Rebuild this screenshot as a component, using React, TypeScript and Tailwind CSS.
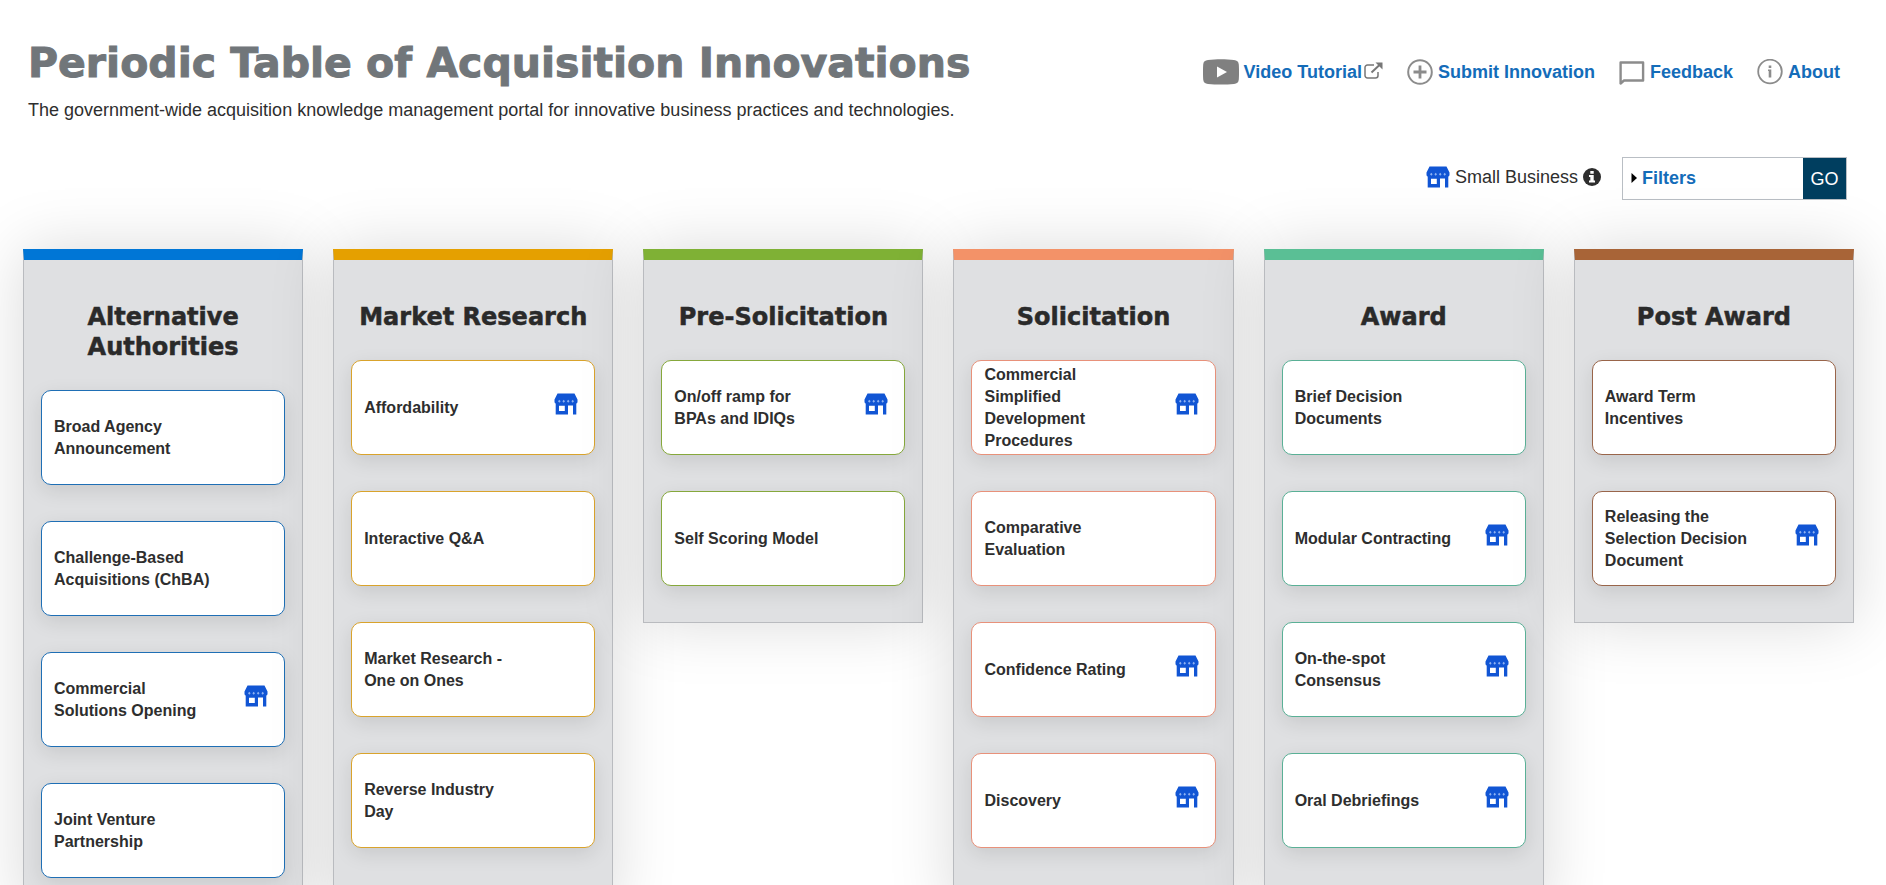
import React from 'react';
import clsx from 'clsx';

type Card = { title: string; smallBusiness?: boolean };

type Column = {
  heading: string;
  bar: string;
  border: string;
  short?: boolean;
  cards: Card[];
};

const columns: Column[] = [
  {
    heading: 'Alternative Authorities',
    bar: 'border-t-[#0076d6]',
    border: 'border-[#1f6fb5]',
    cards: [
      { title: 'Broad Agency Announcement' },
      { title: 'Challenge-Based Acquisitions (ChBA)' },
      { title: 'Commercial Solutions Opening', smallBusiness: true },
      { title: 'Joint Venture Partnership' },
    ],
  },
  {
    heading: 'Market Research',
    bar: 'border-t-[#e5a000]',
    border: 'border-[#d9a32c]',
    cards: [
      { title: 'Affordability', smallBusiness: true },
      { title: 'Interactive Q&A' },
      { title: 'Market Research - One on Ones' },
      { title: 'Reverse Industry Day' },
    ],
  },
  {
    heading: 'Pre-Solicitation',
    bar: 'border-t-[#7fb135]',
    border: 'border-[#86a83c]',
    short: true,
    cards: [
      { title: 'On/off ramp for BPAs and IDIQs', smallBusiness: true },
      { title: 'Self Scoring Model' },
    ],
  },
  {
    heading: 'Solicitation',
    bar: 'border-t-[#f39268]',
    border: 'border-[#e8917a]',
    cards: [
      { title: 'Commercial Simplified Development Procedures', smallBusiness: true },
      { title: 'Comparative Evaluation' },
      { title: 'Confidence Rating', smallBusiness: true },
      { title: 'Discovery', smallBusiness: true },
    ],
  },
  {
    heading: 'Award',
    bar: 'border-t-[#5abf95]',
    border: 'border-[#5ab096]',
    cards: [
      { title: 'Brief Decision Documents' },
      { title: 'Modular Contracting', smallBusiness: true },
      { title: 'On-the-spot Consensus', smallBusiness: true },
      { title: 'Oral Debriefings', smallBusiness: true },
    ],
  },
  {
    heading: 'Post Award',
    bar: 'border-t-[#a86437]',
    border: 'border-[#99654a]',
    short: true,
    cards: [
      { title: 'Award Term Incentives' },
      { title: 'Releasing the Selection Decision Document', smallBusiness: true },
    ],
  },
];

function StoreIcon() {
  return (
    <svg width="24" height="22" viewBox="0 0 24 22" className="shrink-0" aria-hidden="true">
      <path
        fill="#1155d4"
        fillRule="evenodd"
        d="M3.500 0.500h17l3 6v2.200c0 .9-.4 1.500-1.200 1.900V21.500h-3.300V12.500h-5v9H1.700V10.600C.9 10.200.500 9.600.500 8.700V6.500zM5 12.800v5.200h5.800v-5.200z"
      />
      <path
        fill="#8fb2f2"
        d="M4 8.200l1.300-1.500 1.300 1.500-1.300 1.600zM8.400 8.200l1.300-1.500L11 8.200 9.700 9.800zM12.900 8.200l1.300-1.500 1.300 1.500-1.300 1.600zM17.400 8.200l1.300-1.500L20 8.200l-1.300 1.600z"
      />
    </svg>
  );
}

function VideoIcon() {
  return (
    <svg width="36" height="26" viewBox="0 0 36 26" aria-hidden="true">
      <path
        fill="#808080"
        d="M5 1C13 0 23 0 31 1c3 .3 4.500 1.500 4.800 4.500.3 5 .3 10 0 15-.3 3-1.800 4.200-4.800 4.500-8 .8-18 .8-26 0-3-.3-4.500-1.500-4.800-4.500-.3-5-.3-10 0-15C.5 2.500 2 1.300 5 1z"
      />
      <path fill="#fff" d="M14 7.500v11l10-5.500z" />
    </svg>
  );
}

function ExternalIcon() {
  return (
    <svg width="19" height="20" viewBox="0 0 19 20" fill="none" aria-hidden="true">
      <path
        stroke="#777"
        strokeWidth="1.500"
        d="M10 3H3.500A2.500 2.500 0 0 0 1 5.500v8A2.500 2.500 0 0 0 3.500 16h8a2.500 2.500 0 0 0 2.500-2.500V10"
      />
      <path stroke="#777" strokeWidth="2" d="M7.500 10.500L16 2.500" />
      <path fill="#777" d="M11.500 0.500H18.500v7z" />
    </svg>
  );
}

function PlusIcon() {
  return (
    <svg width="26" height="26" viewBox="0 0 26 26" fill="none" stroke="#8c8c8c" aria-hidden="true">
      <circle cx="13" cy="13" r="11.800" strokeWidth="2" />
      <path strokeWidth="2.800" d="M13 6.500v13M6.500 13h13" />
    </svg>
  );
}

function CommentIcon() {
  return (
    <svg width="26" height="26" viewBox="0 0 26 26" fill="none" aria-hidden="true">
      <path stroke="#8c8c8c" strokeWidth="2.400" strokeLinejoin="round" d="M1.600 3.500h22.500v18H5l-3.400 3z" />
    </svg>
  );
}

function InfoIcon() {
  return (
    <svg width="26" height="26" viewBox="0 0 26 26" fill="none" aria-hidden="true">
      <circle cx="13" cy="12.500" r="11.800" stroke="#8c8c8c" strokeWidth="1.800" />
      <path fill="#8c8c8c" d="M11.700 6.500h2.600V9h-2.600zM11 10.500h3.300v8h-2.600v-6.500H11z" />
    </svg>
  );
}

function InfoSolidIcon() {
  return (
    <svg width="18" height="18" viewBox="0 0 18 18" aria-hidden="true">
      <circle cx="9" cy="9" r="9" fill="#2e2e2e" />
      <path fill="#fff" d="M7.300 3h3.400v2.700H7.300zM6 7h4.700v5.500H12v2H6v-2h1.300V9H6z" />
    </svg>
  );
}

function HeaderLinks() {
  return (
    <nav className="flex items-center gap-6 text-lg font-bold text-[#146cb9]">
      <a href="#video" className="flex items-center gap-[5px]">
        <VideoIcon />
        <span className="flex items-center gap-0.5">
          Video Tutorial
          <ExternalIcon />
        </span>
      </a>
      <a href="#submit" className="flex items-center gap-[5px]">
        <PlusIcon />
        Submit Innovation
      </a>
      <a href="#feedback" className="flex items-center gap-[5px]">
        <CommentIcon />
        Feedback
      </a>
      <a href="#about" className="flex items-center gap-[5px]">
        <InfoIcon />
        About
      </a>
    </nav>
  );
}

function InnovationCard({ card, border }: { card: Card; border: string }) {
  return (
    <a
      href="#innovation"
      className={clsx(
        'flex h-[95px] items-center justify-between rounded-[10px] border bg-white pl-3 pr-4 shadow-[0_6px_20px_rgba(0,0,0,0.1)]',
        border
      )}
    >
      <span className="w-40">{card.title}</span>
      {card.smallBusiness && (
        <span className="pb-2">
          <StoreIcon />
        </span>
      )}
    </a>
  );
}

function CategoryColumn({ column }: { column: Column }) {
  return (
    <section
      className={clsx(
        'border border-t-[11px] border-[#b9bbbf] bg-[#dfe0e2] px-[17px] pb-9 shadow-[0_0_60px_rgba(0,0,0,0.15)]',
        column.bar,
        column.short && 'self-start'
      )}
    >
      <h2 className="-mx-2 mb-7 mt-[42px] px-6 text-center font-['DejaVu_Sans',sans-serif] text-2xl font-bold leading-[30px] text-[#2a2a2a] [-webkit-text-stroke:0.5px_#2a2a2a] sm:px-0">
        {column.heading}
      </h2>
      <div className="flex flex-col gap-9 font-bold leading-[22px] text-[#2e2e2e]">
        {column.cards.map((card) => (
          <InnovationCard key={card.title} card={card} border={column.border} />
        ))}
      </div>
    </section>
  );
}

export default function App() {
  return (
    <div className="h-screen overflow-hidden bg-white font-['Liberation_Sans',Arial,sans-serif] text-[#2e2e2e]">
      <header className="flex items-start justify-between pl-7 pr-[46px] pt-[38px]">
        <div>
          <h1 className="font-['DejaVu_Sans',sans-serif] text-[41px] font-bold leading-[50px] text-[#71767a] [-webkit-text-stroke:1px_#71767a]">
            Periodic Table of Acquisition Innovations
          </h1>
          <p className="mt-2 text-lg leading-7">
            The government-wide acquisition knowledge management portal for innovative business practices and
            technologies.
          </p>
        </div>
        <div className="pt-5">
          <HeaderLinks />
        </div>
      </header>

      <div className="mt-[33px] flex items-center justify-end gap-[21px] pr-[39px] text-lg">
        <div className="flex items-center gap-[5px] pb-1">
          <StoreIcon />
          <span>Small Business</span>
          <InfoSolidIcon />
        </div>
        <div className="flex h-[43px] w-[225px] border border-[#b9bec4] bg-white">
          <button type="button" className="flex flex-1 items-center gap-1 pb-0.5 pl-[7px] font-bold text-[#146cb9]">
            <svg width="8" height="12" viewBox="0 0 8 12" aria-hidden="true">
              <path d="M1.500 1v10L7 6z" />
            </svg>
            Filters
          </button>
          <button type="button" className="w-[43px] bg-[#003e5f] text-white">
            GO
          </button>
        </div>
      </div>

      <main className="mt-[49px] grid grid-cols-6 gap-[30px] pl-[23px] pr-8">
        {columns.map((column) => (
          <CategoryColumn key={column.heading} column={column} />
        ))}
      </main>
    </div>
  );
}
